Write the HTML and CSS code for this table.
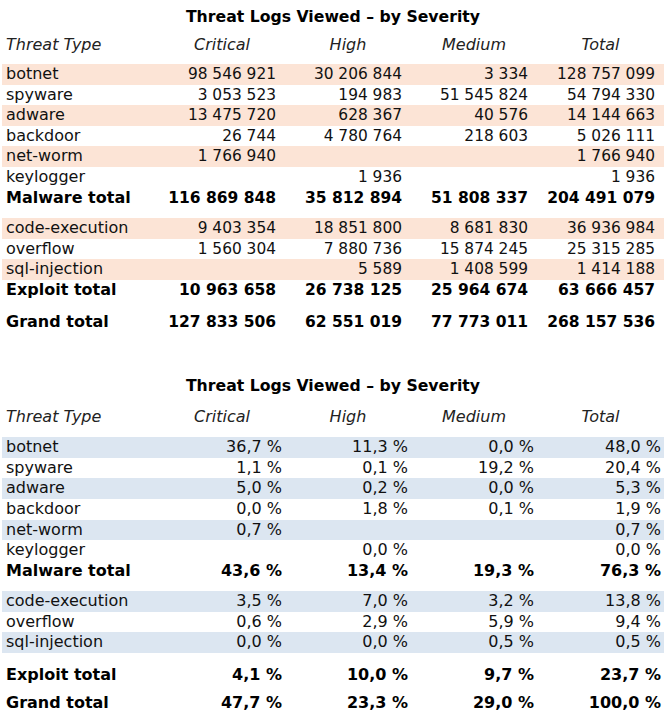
FILE: index.html
```html
<!DOCTYPE html>
<html lang="en">
<head>
<meta charset="utf-8">
<title>Threat Logs Viewed – by Severity</title>
<link rel="stylesheet" href="styles.css">
</head>
<body>
<section class="report report-count">
  <h2 class="title">Threat Logs Viewed – by Severity</h2>
  <div class="row head"><span>Threat Type</span><span>Critical</span><span>High</span><span>Medium</span><span>Total</span></div>
  <div class="row band"><span>botnet</span><span>98 546 921</span><span>30 206 844</span><span>3 334</span><span>128 757 099</span></div>
  <div class="row"><span>spyware</span><span>3 053 523</span><span>194 983</span><span>51 545 824</span><span>54 794 330</span></div>
  <div class="row band"><span>adware</span><span>13 475 720</span><span>628 367</span><span>40 576</span><span>14 144 663</span></div>
  <div class="row"><span>backdoor</span><span>26 744</span><span>4 780 764</span><span>218 603</span><span>5 026 111</span></div>
  <div class="row band"><span>net-worm</span><span>1 766 940</span><span></span><span></span><span>1 766 940</span></div>
  <div class="row"><span>keylogger</span><span></span><span>1 936</span><span></span><span>1 936</span></div>
  <div class="row total"><span>Malware total</span><span>116 869 848</span><span>35 812 894</span><span>51 808 337</span><span>204 491 079</span></div>
  <div class="row band gap"><span>code-execution</span><span>9 403 354</span><span>18 851 800</span><span>8 681 830</span><span>36 936 984</span></div>
  <div class="row"><span>overflow</span><span>1 560 304</span><span>7 880 736</span><span>15 874 245</span><span>25 315 285</span></div>
  <div class="row band"><span>sql-injection</span><span></span><span>5 589</span><span>1 408 599</span><span>1 414 188</span></div>
  <div class="row total"><span>Exploit total</span><span>10 963 658</span><span>26 738 125</span><span>25 964 674</span><span>63 666 457</span></div>
  <div class="row total gap-grand"><span>Grand total</span><span>127 833 506</span><span>62 551 019</span><span>77 773 011</span><span>268 157 536</span></div>
</section>

<section class="report report-pct">
  <h2 class="title">Threat Logs Viewed – by Severity</h2>
  <div class="row head"><span>Threat Type</span><span>Critical</span><span>High</span><span>Medium</span><span>Total</span></div>
  <div class="row band"><span>botnet</span><span>36,7 %</span><span>11,3 %</span><span>0,0 %</span><span>48,0 %</span></div>
  <div class="row"><span>spyware</span><span>1,1 %</span><span>0,1 %</span><span>19,2 %</span><span>20,4 %</span></div>
  <div class="row band"><span>adware</span><span>5,0 %</span><span>0,2 %</span><span>0,0 %</span><span>5,3 %</span></div>
  <div class="row"><span>backdoor</span><span>0,0 %</span><span>1,8 %</span><span>0,1 %</span><span>1,9 %</span></div>
  <div class="row band"><span>net-worm</span><span>0,7 %</span><span></span><span></span><span>0,7 %</span></div>
  <div class="row"><span>keylogger</span><span></span><span>0,0 %</span><span></span><span>0,0 %</span></div>
  <div class="row total"><span>Malware total</span><span>43,6 %</span><span>13,4 %</span><span>19,3 %</span><span>76,3 %</span></div>
  <div class="row band gap"><span>code-execution</span><span>3,5 %</span><span>7,0 %</span><span>3,2 %</span><span>13,8 %</span></div>
  <div class="row"><span>overflow</span><span>0,6 %</span><span>2,9 %</span><span>5,9 %</span><span>9,4 %</span></div>
  <div class="row band"><span>sql-injection</span><span>0,0 %</span><span>0,0 %</span><span>0,5 %</span><span>0,5 %</span></div>
  <div class="row total gap-exploit"><span>Exploit total</span><span>4,1 %</span><span>10,0 %</span><span>9,7 %</span><span>23,7 %</span></div>
  <div class="row total gap-grand2"><span>Grand total</span><span>47,7 %</span><span>23,3 %</span><span>29,0 %</span><span>100,0 %</span></div>
</section>
</body>
</html>
```
FILE: styles.css
```css
html, body {
  margin: 0;
  padding: 0;
  background: #fff;
}
body {
  font-family: "DejaVu Sans", Verdana, sans-serif;
  font-size: 16px;
  color: #111;
  width: 664px;
  overflow: hidden;
}
.report {
  margin-left: 2px;
  width: 662px;
}
.report-count {
  padding-top: 7px;
}
.report-pct {
  margin-top: 44px;
}
.title {
  margin: 0;
  font-size: 15.7px;
  font-weight: bold;
  line-height: 20px;
  text-align: center;
  color: #000;
}
.row {
  display: grid;
  grid-template-columns: 157px 126px 126px 126px 127px;
  height: 20.6px;
  line-height: 20.6px;
  white-space: nowrap;
}
.row span {
  text-align: right;
  padding-right: 9px;
}
.report-count .row span {
  font-size: 15.4px;
}
.report-count .row.total span {
  font-size: 15.5px;
}
.report-pct .row span {
  padding-right: 3px;
}
.report .row span:first-child {
  text-align: left;
  padding-left: 4px;
  padding-right: 0;
  font-size: 16px;
}
.row.head {
  font-style: italic;
  height: 20px;
  line-height: 20px;
  margin-top: 8px;
  margin-bottom: 9px;
  color: #222;
}
.report-pct .row.head {
  margin-top: 11px;
  margin-bottom: 10px;
}
.report .row.head span {
  text-align: center;
  padding: 0;
  font-size: 16px;
}
.report .row.head span:first-child {
  text-align: left;
  padding-left: 4px;
}
.band {
  background: #fce4d6;
}
.report-pct .band {
  background: #dce6f1;
}
.total {
  font-weight: bold;
  color: #000;
}
.gap {
  margin-top: 10px;
}
.gap-grand {
  margin-top: 11px;
}
.gap-exploit {
  margin-top: 12px;
}
.gap-grand2 {
  margin-top: 7px;
}
```
